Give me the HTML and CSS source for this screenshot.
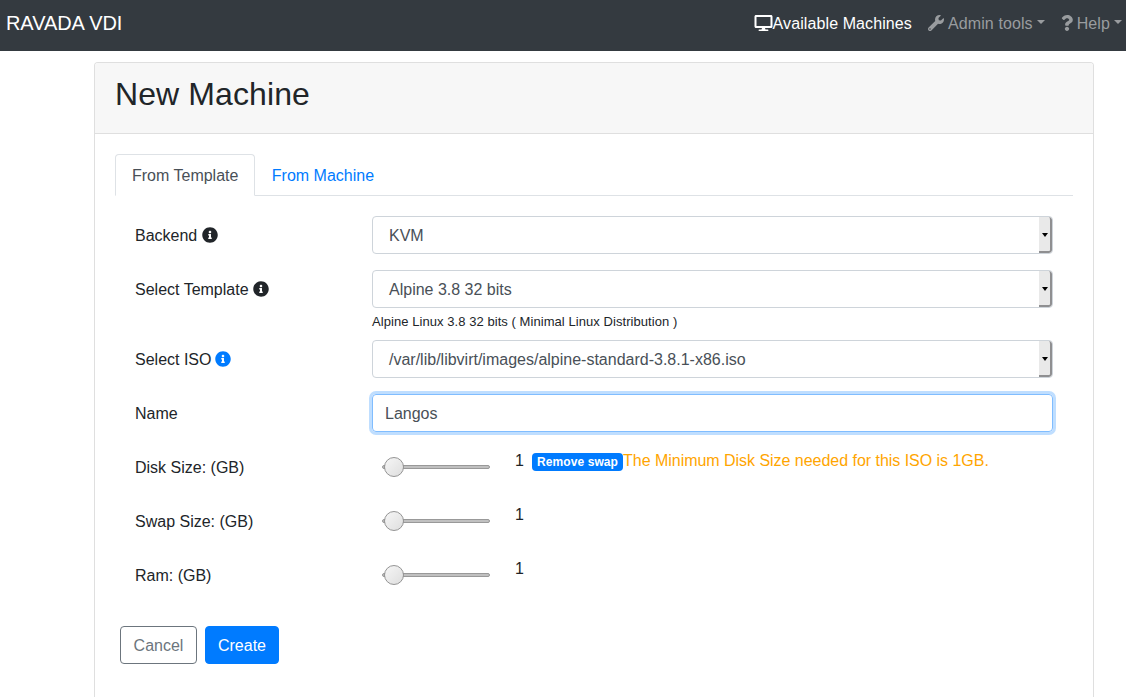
FILE: index.html
```html
<!DOCTYPE html>
<html lang="en">
<head>
<meta charset="utf-8">
<title>RAVADA VDI</title>
<link rel="stylesheet" href="styles.css">
</head>
<body>
<svg class="defs" width="0" height="0">
  <symbol id="info" viewBox="0 0 512 512"><path d="M256 8C119.043 8 8 119.083 8 256c0 136.997 111.043 248 248 248s248-111.003 248-248C504 119.083 392.957 8 256 8zm0 110c23.196 0 42 18.804 42 42s-18.804 42-42 42-42-18.804-42-42 18.804-42 42-42zm56 254c0 6.627-5.373 12-12 12h-88c-6.627 0-12-5.373-12-12v-24c0-6.627 5.373-12 12-12h12v-64h-12c-6.627 0-12-5.373-12-12v-24c0-6.627 5.373-12 12-12h64c6.627 0 12 5.373 12 12v100h12c6.627 0 12 5.373 12 12v24z"/></symbol>
</svg>
<nav class="navbar">
  <a class="brand">RAVADA VDI</a>
  <div class="links">
    <a class="link active"><svg class="desktop" viewBox="0 0 576 512"><path d="M528 0H48C21.5 0 0 21.5 0 48v320c0 26.5 21.5 48 48 48h192l-16 48h-72c-13.3 0-24 10.7-24 24s10.7 24 24 24h272c13.3 0 24-10.7 24-24s-10.7-24-24-24h-72l-16-48h192c26.5 0 48-21.5 48-48V48c0-26.5-21.5-48-48-48zm-16 352H64V64h448v288z"/></svg>Available Machines</a>
    <a class="link"><svg class="wrench" viewBox="0 0 512 512"><path d="M507.73 109.1c-2.24-9.03-13.54-12.09-20.12-5.51l-74.36 74.36-67.88-11.31-11.31-67.88 74.36-74.36c6.62-6.62 3.43-17.9-5.66-20.16-47.38-11.74-99.55.91-136.58 37.93-39.64 39.64-50.55 97.1-34.05 147.2L18.74 402.76c-24.99 24.99-24.99 65.51 0 90.5 24.99 24.99 65.51 24.99 90.5 0l213.21-213.21c50.12 16.71 107.47 5.68 147.37-34.22 37.07-37.07 49.7-89.32 37.91-136.73zM64 472c-13.25 0-24-10.75-24-24 0-13.26 10.75-24 24-24s24 10.74 24 24c0 13.25-10.75 24-24 24z"/></svg>Admin tools<i class="caret"></i></a>
    <a class="link"><svg class="question" viewBox="0 0 384 512"><path d="M202.021 0C122.202 0 70.503 32.703 29.914 91.026c-7.363 10.58-5.093 25.086 5.178 32.874l43.138 32.709c10.373 7.865 25.132 6.026 33.253-4.148 25.049-31.381 43.63-49.449 82.757-49.449 30.764 0 68.816 19.799 68.816 49.631 0 22.552-18.617 34.134-48.993 51.164-35.423 19.86-82.299 44.576-82.299 106.405V320c0 13.255 10.745 24 24 24h72.471c13.255 0 24-10.745 24-24v-5.773c0-42.86 125.268-44.645 125.268-160.627C377.504 66.256 286.902 0 202.021 0zM192 373.459c-38.196 0-69.271 31.075-69.271 69.271 0 38.195 31.075 69.27 69.271 69.27s69.271-31.075 69.271-69.271-31.075-69.27-69.271-69.27z"/></svg>Help<i class="caret"></i></a>
  </div>
</nav>
<main class="card">
  <header class="card-header"><h2>New Machine</h2></header>
  <div class="card-body">
    <div class="tabs"><a class="tab selected">From Template</a><a class="tab">From Machine</a></div>
    <form class="form">
      <div class="row"><label>Backend <svg class="info"><use href="#info"/></svg></label>
        <div class="select"><span>KVM</span><b class="drop"></b></div></div>
      <div class="row"><label>Select Template <svg class="info"><use href="#info"/></svg></label>
        <div class="field"><div class="select"><span>Alpine 3.8 32 bits</span><b class="drop"></b></div>
        <small>Alpine Linux 3.8 32 bits ( Minimal Linux Distribution )</small></div></div>
      <div class="row"><label>Select ISO <svg class="info blue"><use href="#info"/></svg></label>
        <div class="select"><span>/var/lib/libvirt/images/alpine-standard-3.8.1-x86.iso</span><b class="drop"></b></div></div>
      <div class="row"><label>Name</label><div class="input">Langos</div></div>
      <div class="row"><label>Disk Size: (GB)</label><div class="slider"><i class="knob"></i></div>
        <div class="value">1<span class="badge">Remove swap</span><span class="warning">The Minimum Disk Size needed for this ISO is 1GB.</span></div></div>
      <div class="row"><label>Swap Size: (GB)</label><div class="slider"><i class="knob"></i></div><div class="value">1</div></div>
      <div class="row"><label>Ram: (GB)</label><div class="slider"><i class="knob"></i></div><div class="value">1</div></div>
    </form>
    <div class="actions"><button class="btn">Cancel</button><button class="btn primary">Create</button></div>
  </div>
</main>
</body>
</html>
```
FILE: styles.css
```css
* { box-sizing: border-box; }
body {
  margin: 0;
  height: 697px;
  overflow: hidden;
  background: #fff;
  color: #212529;
  font: 16px/26px "Liberation Sans", Arial, sans-serif;
}
.defs { display: block; }
svg { fill: currentColor; }
.navbar {
  display: flex;
  justify-content: space-between;
  height: 51px;
  padding: 8px 4px 0 6px;
  background: #343a40;
}
.brand { color: #fff; font-size: 20px; line-height: 30px; letter-spacing: -0.08px; }
.links { display: flex; gap: 16px; padding-top: 3px; }
.link { display: flex; height: 24px; color: #999c9f; white-space: nowrap; letter-spacing: 0.1px; }
.link.active { color: #fff; }
.desktop { width: 19px; height: 16px; margin-top: 4px; }
.wrench { width: 16px; height: 16px; margin: 4px 4px 0 0; }
.question { width: 12px; height: 16px; margin: 4px 4px 0 0; }
.caret {
  height: 0;
  margin: 9px 0 0 4px;
  border: 4px solid transparent;
  border-top-color: currentColor;
  border-bottom: 0;
}
.card {
  width: 1000px;
  height: 635px;
  margin: 11px 0 0 94px;
  border: 1px solid #dfdfdf;
  border-bottom: 0;
  border-radius: 4px 4px 0 0;
}
.card-header {
  height: 71px;
  padding: 12px 20px;
  background: #f7f7f7;
  border-bottom: 1px solid #dfdfdf;
  border-radius: 3px 3px 0 0;
}
h2 { margin: 0; font-size: 32px; font-weight: 400; line-height: 38px; letter-spacing: 0.1px; }
.card-body { padding: 20px; }
.tabs { display: flex; height: 42px; border-bottom: 1px solid #dee2e6; }
.tab {
  height: 42px;
  margin-left: -0.6px;
  padding: 8px 16px;
  border: 1px solid transparent;
  border-radius: 4px 4px 0 0;
  color: #007bff;
}
.tab.selected {
  margin-left: 0;
  border-color: #dee2e6 #dee2e6 #fff;
  background: #fff;
  color: #495057;
}
.form {
  display: flex;
  flex-direction: column;
  gap: 16px;
  padding: 20px 20px 0;
}
.row { display: flex; height: 38px; }
.row:has(.field) { height: 54px; }
label { width: 237px; padding-top: 7px; }
.info { width: 16px; height: 16px; vertical-align: -2px; }
.info.blue { margin-left: -1px; color: #007bff; }
.select, .input {
  display: flex;
  width: 681px;
  height: 38px;
  border: 1px solid #ced4da;
  border-radius: 4px;
  color: #495057;
}
.select { justify-content: space-between; padding-left: 16px; overflow: hidden; }
.select span { padding-top: 6px; }
.drop {
  display: flex;
  align-items: center;
  justify-content: center;
  width: 13px;
  padding: 1px 0 0 1px;
  background: #e9e9e9;
  border-right: 2px solid #8f8f91;
  border-bottom: 2px solid #8f8f91;
  border-radius: 0 3px 3px 0;
}
.drop::after {
  content: "";
  border: 3px solid transparent;
  border-top: 4px solid #000;
  border-bottom: 0;
}
small {
  display: block;
  padding-top: 4px;
  font-size: 13px;
  line-height: 20px;
  letter-spacing: 0.06px;
}
.input {
  padding: 6px 12px;
  border-color: #80bdff;
  box-shadow: 0 0 0 3px #bfdeff;
}
.slider {
  width: 108px;
  height: 4px;
  margin: 17px 25px 0 10px;
  border: 1px solid #999;
  border-radius: 2px;
  background: #c0c0c0;
}
.knob {
  display: block;
  width: 20px;
  height: 20px;
  margin: -9px 0 0 1px;
  border: 1px solid #949494;
  border-radius: 50%;
  background: linear-gradient(135deg, #f6f6f6, #dedede);
}
.value { display: flex; }
.badge {
  height: 18px;
  margin: 5px 0 0 8px;
  padding: 3px 5px;
  border-radius: 4px;
  background: #007bff;
  color: #fff;
  font-size: 12px;
  font-weight: 700;
  line-height: 12px;
  letter-spacing: 0.1px;
}
.warning { color: orange; letter-spacing: -0.03px; }
.actions { display: flex; gap: 8px; padding: 32px 5px 0; }
.btn {
  width: 77px;
  height: 38px;
  padding: 2px 0 0;
  border: 1px solid #6c757d;
  border-radius: 4px;
  background: #fff;
  color: #6c757d;
  font: inherit;
}
.btn.primary { width: 74px; border-color: #007bff; background: #007bff; color: #fff; }
```
